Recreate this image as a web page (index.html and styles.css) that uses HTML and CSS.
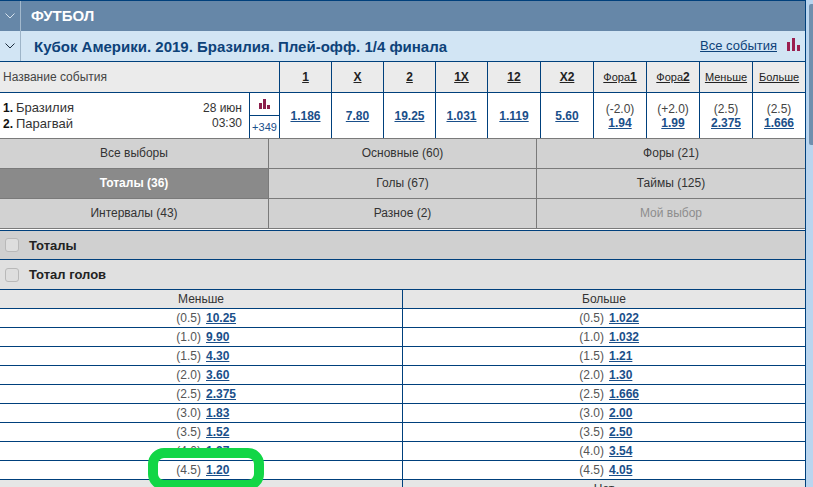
FILE: index.html
```html
<!DOCTYPE html>
<html lang="ru">
<head>
    <meta charset="UTF-8">
    <title>Кубок Америки. 2019</title>
    <link rel="stylesheet" href="styles.css">
</head>
<body>
    <div class="market">
        <div class="sport-head">
            <span class="fold">
                <svg width="10" height="6" viewBox="0 0 10 6"><polyline points="0.5,0.5 5,5 9.5,0.5" fill="none" stroke="#d7e3ee" stroke-width="1"/></svg>
            </span>
            <span class="sport-title">ФУТБОЛ</span>
        </div>
        <div class="league-head">
            <span class="fold">
                <svg width="10" height="6" viewBox="0 0 10 6"><polyline points="0.5,0.5 5,5 9.5,0.5" fill="none" stroke="#1c2c3c" stroke-width="1"/></svg>
            </span>
            <span class="league-title">Кубок Америки. 2019. Бразилия. Плей-офф. 1/4 финала</span>
            <a class="all-events">Все события</a>
            <svg class="stats-big" width="13" height="13" viewBox="0 0 13 13"><path d="M0 4h3v9H0zM5 0h3v13H5zM10 7h3v6h-3z" fill="#9b1f4f"/></svg>
        </div>

        <div class="odds-grid odds-head">
            <div class="event-name-head">Название события</div>
            <div class="head-cell"><u>1</u></div>
            <div class="head-cell"><u>Х</u></div>
            <div class="head-cell"><u>2</u></div>
            <div class="head-cell"><u>1Х</u></div>
            <div class="head-cell"><u>12</u></div>
            <div class="head-cell"><u>Х2</u></div>
            <div class="head-cell small"><u>Фора<b>1</b></u></div>
            <div class="head-cell small"><u>Фора<b>2</b></u></div>
            <div class="head-cell small"><u>Меньше</u></div>
            <div class="head-cell small"><u>Больше</u></div>
        </div>

        <div class="odds-grid event-row">
            <div class="event-cell">
                <div class="teams">
                    <div><b>1.</b>Бразилия</div>
                    <div><b>2.</b>Парагвай</div>
                </div>
                <div class="event-time">
                    <div>28 июн</div>
                    <div>03:30</div>
                </div>
                <div class="event-extra">
                    <div class="extra-stats">
                        <svg width="11" height="10" viewBox="0 0 11 10"><path d="M0 4h3v6H0zM4 0h3v10H4zM8 6h3v4H8z" fill="#8c1f4c"/></svg>
                    </div>
                    <div class="extra-more">+349</div>
                </div>
            </div>
            <div class="odd-cell"><a class="odd">1.186</a></div>
            <div class="odd-cell"><a class="odd">7.80</a></div>
            <div class="odd-cell"><a class="odd">19.25</a></div>
            <div class="odd-cell"><a class="odd">1.031</a></div>
            <div class="odd-cell"><a class="odd">1.119</a></div>
            <div class="odd-cell"><a class="odd">5.60</a></div>
            <div class="odd-cell stacked"><span>(-2.0)</span><a class="odd">1.94</a></div>
            <div class="odd-cell stacked"><span>(+2.0)</span><a class="odd">1.99</a></div>
            <div class="odd-cell stacked"><span>(2.5)</span><a class="odd">2.375</a></div>
            <div class="odd-cell stacked"><span>(2.5)</span><a class="odd">1.666</a></div>
        </div>

        <div class="tabs">
            <div class="tab">Все выборы</div>
            <div class="tab">Основные (60)</div>
            <div class="tab">Форы (21)</div>
            <div class="tab active">Тоталы (36)</div>
            <div class="tab">Голы (67)</div>
            <div class="tab">Таймы (125)</div>
            <div class="tab">Интервалы (43)</div>
            <div class="tab">Разное (2)</div>
            <div class="tab disabled">Мой выбор</div>
        </div>

        <div class="section-row dark"><span class="check"></span>Тоталы</div>
        <div class="section-row light"><span class="check"></span>Тотал голов</div>

        <div class="totals">
            <div class="totals-head">Меньше</div><div class="totals-head">Больше</div>
            <div class="total"><span>(0.5)</span><a class="odd">10.25</a></div><div class="total"><span>(0.5)</span><a class="odd">1.022</a></div>
            <div class="total"><span>(1.0)</span><a class="odd">9.90</a></div><div class="total"><span>(1.0)</span><a class="odd">1.032</a></div>
            <div class="total"><span>(1.5)</span><a class="odd">4.30</a></div><div class="total"><span>(1.5)</span><a class="odd">1.21</a></div>
            <div class="total"><span>(2.0)</span><a class="odd">3.60</a></div><div class="total"><span>(2.0)</span><a class="odd">1.30</a></div>
            <div class="total"><span>(2.5)</span><a class="odd">2.375</a></div><div class="total"><span>(2.5)</span><a class="odd">1.666</a></div>
            <div class="total"><span>(3.0)</span><a class="odd">1.83</a></div><div class="total"><span>(3.0)</span><a class="odd">2.00</a></div>
            <div class="total"><span>(3.5)</span><a class="odd">1.52</a></div><div class="total"><span>(3.5)</span><a class="odd">2.50</a></div>
            <div class="total"><span>(4.0)</span><a class="odd">1.27</a></div><div class="total"><span>(4.0)</span><a class="odd">3.54</a></div>
            <div class="total"><span>(4.5)</span><a class="odd">1.20</a></div><div class="total"><span>(4.5)</span><a class="odd">4.05</a></div>
            <div class="totals-head">Да</div><div class="totals-head">Нет</div>
        </div>
    </div>

    <div class="scrollbar">
        <div class="scroll-thumb"></div>
    </div>

    <div class="highlight"></div>
</body>
</html>
```

FILE: styles.css
```css
html, body {
    margin: 0;
    padding: 0;
    height: 100%;
}

body {
    position: relative;
    display: flex;
    align-items: stretch;
    height: 487px;
    overflow: hidden;
    background-color: #fff;
    font-family: "Liberation Sans", Arial, sans-serif;
    font-size: 12px;
    color: #333;
}

* {
    box-sizing: border-box;
}

.market {
    width: 806px;
    flex: none;
    border-right: 1px solid #00407c;
    overflow: hidden;
}

.scrollbar {
    flex: 1;
    padding: 4px 0 0 3px;
    background-color: #b9d5ef;
}

.scroll-thumb {
    height: 141px;
    background-color: #6f8fae;
    border-radius: 2px 0 0 2px;
}

.sport-head, .league-head {
    display: flex;
    align-items: center;
}

.sport-head {
    height: 31px;
    border-top: 1px solid #00407c;
    background-color: #6687a8;
}

.league-head {
    height: 31px;
    border-bottom: 1px solid #00407c;
    background-color: #d2e5f4;
    padding-right: 5px;
}

.fold {
    display: flex;
    align-items: center;
    justify-content: center;
    width: 21px;
    height: 100%;
    flex: none;
    border-right: 1px solid #a3b9cd;
}

.league-head .fold {
    border-right-color: #9db4c8;
}

.sport-title {
    margin: 0 0 2px 10px;
    font-size: 15px;
    font-weight: bold;
    color: #fff;
}

.league-title {
    flex: 1;
    margin-left: 13px;
    font-size: 15px;
    font-weight: bold;
    color: #0d4279;
}

.all-events {
    margin-bottom: 2px;
    font-size: 13px;
    color: #0d4279;
    text-decoration: underline;
}

.stats-big {
    margin: 0 0 3px 10px;
}

.odds-grid {
    display: grid;
    grid-template-columns: 279px repeat(4, 52px) repeat(6, 53px);
}

.odds-head {
    height: 31px;
    border-bottom: 1px solid #00407c;
    background-color: #ebebeb;
}

.event-name-head {
    display: flex;
    align-items: center;
    padding-left: 3px;
    color: #444;
}

.head-cell {
    display: flex;
    align-items: center;
    justify-content: center;
    border-left: 1px solid #00407c;
    font-weight: bold;
    color: #222;
}

.head-cell.small {
    font-size: 11px;
    font-weight: normal;
}

.head-cell.small b {
    font-size: 12px;
}

.event-row {
    height: 45px;
}

.event-cell {
    display: flex;
    align-items: stretch;
}

.teams {
    flex: 1;
    padding: 7px 0 0 3px;
    font-size: 13px;
    line-height: 16px;
    color: #333;
}

.teams b {
    margin-right: 3px;
    font-size: 12px;
    color: #111;
}

.event-time {
    padding: 8px 7px 0 0;
    line-height: 15px;
    text-align: right;
    color: #333;
}

.event-extra {
    width: 30px;
    display: flex;
    flex-direction: column;
    border-left: 1px solid #00407c;
}

.extra-stats {
    display: flex;
    align-items: center;
    justify-content: center;
    height: 23px;
    border-bottom: 1px solid #00407c;
}

.extra-more {
    flex: 1;
    display: flex;
    align-items: center;
    justify-content: center;
    font-size: 11px;
    color: #1a4f8a;
}

.odd-cell {
    display: flex;
    align-items: center;
    justify-content: center;
    border-left: 1px solid #00407c;
}

.odd-cell.stacked {
    flex-direction: column;
    line-height: 14px;
    color: #444;
}

.odd {
    font-weight: bold;
    color: #1a4f8a;
    text-decoration: underline;
}

.tabs {
    display: grid;
    grid-template-columns: 268px 268px 269px;
    border-bottom: 1px solid #7a7a7a;
}

.tab {
    display: flex;
    align-items: center;
    justify-content: center;
    height: 30px;
    padding-bottom: 1px;
    border-top: 1px solid #7a7a7a;
    border-left: 1px solid #7a7a7a;
    background-color: #d2d2d2;
    color: #333;
}

.tab:nth-child(3n+1) {
    border-left: 0;
}

.tab.active {
    background-color: #8a8a8a;
    color: #fff;
    font-weight: bold;
}

.tab.disabled {
    color: #8d8d8d;
}

.section-row {
    display: flex;
    align-items: center;
    gap: 10px;
    padding-left: 5px;
    border-top: 1px solid #00407c;
    font-size: 13px;
    font-weight: bold;
    color: #222;
}

.section-row.dark {
    height: 29px;
    margin-top: 1px;
    background-color: #d0d0d0;
}

.section-row.light {
    height: 30px;
    background-color: #e0e0e0;
}

.check {
    width: 14px;
    height: 14px;
    border: 1px solid #b9b9b9;
    border-radius: 3px;
    background-color: #dedede;
}

.totals {
    display: grid;
    grid-template-columns: 402px 403px;
}

.totals-head, .total {
    height: 19px;
    border-top: 1px solid #00407c;
}

.totals-head:nth-child(even), .total:nth-child(even) {
    border-left: 1px solid #00407c;
}

.totals-head {
    display: flex;
    align-items: center;
    justify-content: center;
    background-color: #e6e6e6;
    color: #333;
}

/* handicap ends at the middle of the column, the odds start just after it */
.total {
    display: grid;
    grid-template-columns: 1fr 1fr;
    align-items: center;
    color: #555;
}

.total span {
    text-align: right;
}

.total .odd {
    justify-self: start;
    margin-left: 5px;
}

.highlight {
    position: absolute;
    left: 148px;
    top: 448px;
    width: 116px;
    height: 42px;
    border: 10px solid #12d646;
    border-radius: 16px;
}
```
